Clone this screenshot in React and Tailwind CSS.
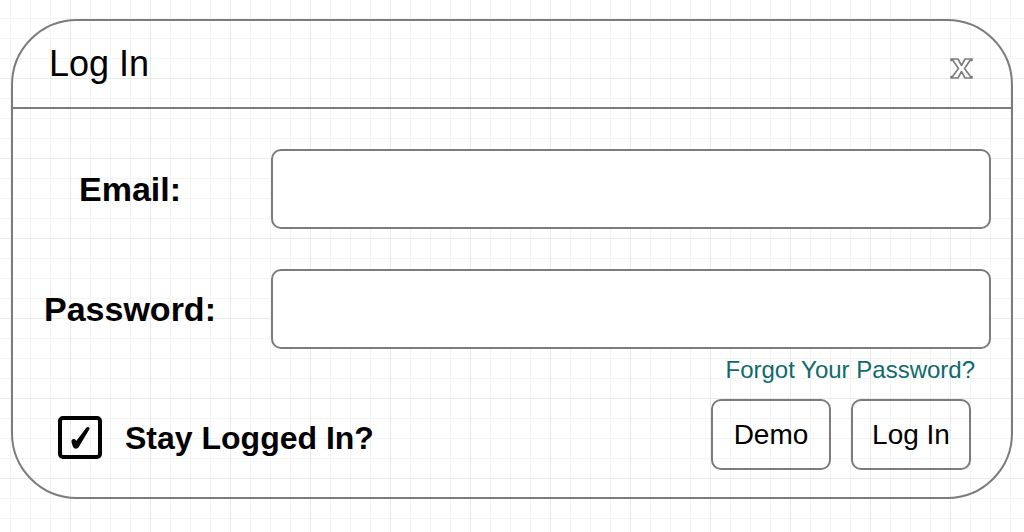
import React from 'react';

export default function App() {
  return (
    <div
      className="w-[1024px] h-[532px] overflow-hidden bg-white pt-[19px] pl-[11px] font-['Liberation_Sans',Arial,sans-serif] bg-[linear-gradient(to_right,#eaeaea_1px,transparent_1px),linear-gradient(to_bottom,#eaeaea_1px,transparent_1px),linear-gradient(to_right,#f4f4f4_1px,transparent_1px),linear-gradient(to_bottom,#f4f4f4_1px,transparent_1px)] [background-size:80px_80px,80px_80px,20px_20px,20px_20px] [background-position:70px_78px,70px_78px,10px_18px,10px_18px]"
    >
      {/* Dialog */}
      <div className="w-[1002px] h-[480px] border-2 border-[#7c7c7c] rounded-[66px] flex flex-col">
        {/* Header */}
        <div className="h-[88px] border-b-2 border-[#7c7c7c] flex justify-between pl-[36px] pr-[38px]">
          <h1 className="pt-[25px] text-[36px] leading-none text-black">Log In</h1>
          <svg width="23" height="21" viewBox="0 0 23 21" className="mt-[37px]">
            <path
              d="M1 1 H8 L11.5 7.5 L15 1 H22 V2.5 L20 2.5 L14.5 10.5 L20.5 18.5 L22 18.5 V20 H15 L11.5 13.5 L8 20 H1 V18.5 L2.5 18.5 L8.5 10.5 L3 2.5 L1 2.5 Z"
              fill="white"
              stroke="#7c7c7c"
              strokeWidth="1.6"
              strokeLinejoin="round"
            />
          </svg>
        </div>

        {/* Body */}
        <div className="flex flex-col pt-[40px] pr-[20px]">
          <div className="flex items-center">
            <label className="w-[234px] text-center text-[34px] font-bold leading-none text-black">Email:</label>
            <input className="ml-[24px] w-[720px] h-[80px] bg-white border-2 border-[#7c7c7c] rounded-[10px] outline-none px-3 text-[24px]" />
          </div>

          <div className="flex items-center mt-[40px]">
            <label className="w-[234px] text-center text-[34px] font-bold leading-none text-black">Password:</label>
            <input type="password" className="ml-[24px] w-[720px] h-[80px] bg-white border-2 border-[#7c7c7c] rounded-[10px] outline-none px-3 text-[24px]" />
          </div>

          <div className="flex justify-end mt-[9px] mr-[16px]">
            <a className="text-[24px] leading-none text-[#0f6b6a]">Forgot Your Password?</a>
          </div>

          <div className="flex justify-between items-start mt-[17px]">
            <div className="flex items-center ml-[45px] mt-[17px]">
              <div className="w-[44px] h-[43px] shrink-0 border-[4px] border-black rounded-[5px] flex items-center justify-center">
                <svg width="26" height="26" viewBox="0 0 26 26" className="shrink-0">
                  <path
                    d="M4.5 15.5 C6 13.5 8 13.6 9.2 16 L19.5 2.5 C20.6 1.2 23.4 2.2 22.4 4.2 L11.8 22 C10.6 24.2 7.2 24.4 6.2 22 C5.4 20 4.2 17.4 4.5 15.5 Z"
                    fill="black"
                  />
                </svg>
              </div>
              <span className="ml-[23px] text-[32px] font-bold leading-none text-black">Stay Logged In?</span>
            </div>

            <div className="flex gap-[20px] mr-[20px]">
              <button className="w-[120px] h-[71px] border-2 border-[#7c7c7c] rounded-[10px] text-[28px] text-black">Demo</button>
              <button className="w-[120px] h-[71px] border-2 border-[#7c7c7c] rounded-[10px] text-[28px] text-black">Log In</button>
            </div>
          </div>
        </div>
      </div>
    </div>
  );
}
